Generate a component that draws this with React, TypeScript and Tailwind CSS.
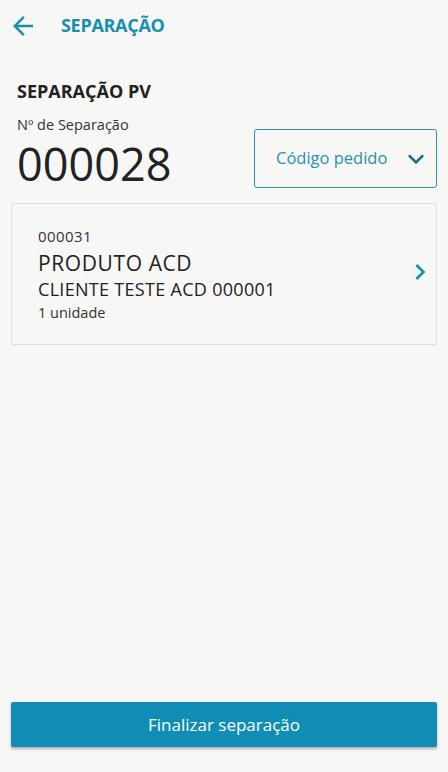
function BackArrow() {
  return (
    <svg viewBox="0 0 24 24" width="30" height="30" aria-hidden="true" className="text-[#1a8eaf]">
      <path fill="currentColor" d="M20 11H7.83l5.59-5.59L12 4l-8 8 8 8 1.41-1.41L7.83 13H20v-2z" />
    </svg>
  )
}

function ExpandMore() {
  return (
    <svg viewBox="0 0 24 24" width="32" height="32" aria-hidden="true" className="text-[#16718c]">
      <path fill="currentColor" d="M16.59 8.59L12 13.17 7.41 8.59 6 10l6 6 6-6z" />
    </svg>
  )
}

function ChevronRight() {
  return (
    <svg viewBox="0 0 24 24" width="32" height="32" aria-hidden="true" className="text-[#1a8eaf]">
      <path fill="currentColor" d="M10 6L8.59 7.41 13.17 12l-4.58 4.59L10 18l6-6z" />
    </svg>
  )
}

export default function App() {
  return (
    <div
      className="flex h-[772px] w-[448px] flex-col bg-[#f7f7f6] text-[#222]"
      style={{ fontFamily: '"Open Sans", "Noto Sans", sans-serif' }}
    >
      <header className="flex h-[50px] items-center pl-[8px] pt-[1px]">
        <BackArrow />
        <h1 className="ml-[23px] text-[18px] font-bold tracking-[-0.3px] text-[#1a8eaf]">
          SEPARAÇÃO
        </h1>
      </header>

      <main className="flex flex-1 flex-col px-[11px]">
        <h2 className="mt-[30px] pl-[6px] text-[18px] font-bold leading-[22px] text-[#222]">
          SEPARAÇÃO PV
        </h2>

        <div className="mt-[13px] flex items-start justify-between">
          <div className="pl-[6px]">
            <p className="text-[14.5px] leading-[20px] text-[#333]">Nº de Separação</p>
            <p className="mt-[3px] text-[45px] leading-[52px] text-[#222]">000028</p>
          </div>
          <button className="mt-[14px] flex h-[59px] w-[183px] items-center justify-between rounded-[3px] border-[1.5px] border-[#2b95b3] pl-[21px] pr-[4px] text-[16.5px] text-[#2a8fb0]">
            Código pedido
            <ExpandMore />
          </button>
        </div>

        <div className="mt-[13px] flex items-center justify-between rounded-[2px] border border-[#dedede] pb-[21px] pl-[26px] pr-0 pt-[22px]">
          <div>
            <p className="text-[15px] leading-[20px] tracking-[0.4px] text-[#333]">000031</p>
            <p className="mt-[4px] text-[21px] leading-[26px] tracking-[0.6px] text-[#222]">PRODUTO ACD</p>
            <p className="mt-[1px] text-[18px] leading-[24px] tracking-[0.3px] text-[#222]">
              CLIENTE TESTE ACD 000001
            </p>
            <p className="mt-[2px] text-[14.5px] leading-[20px] text-[#333]">1 unidade</p>
          </div>
          <div className="-mt-[6px]">
            <ChevronRight />
          </div>
        </div>

        <div className="flex-1" />

        <button className="mb-[25px] h-[45px] w-full rounded-[2px] bg-[#0f8db4] text-[17px] text-white shadow-[0_2px_3px_rgba(0,0,0,0.3)]">
          Finalizar separação
        </button>
      </main>
    </div>
  )
}
